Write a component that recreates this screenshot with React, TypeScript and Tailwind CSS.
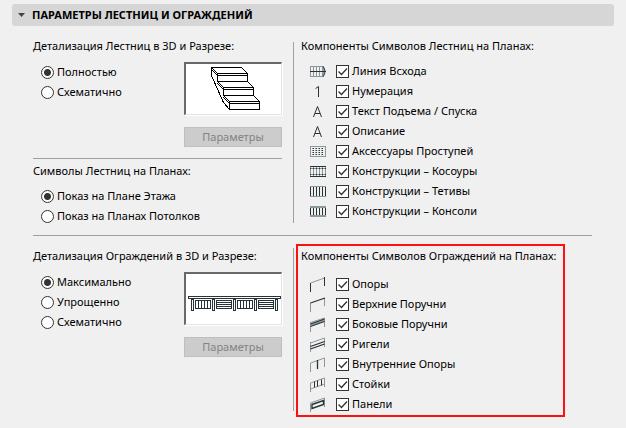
import { ReactNode } from 'react';

const DARK = '#263138';
const GRAY = '#8d9699';

function PlanIcon({ children }: { children: ReactNode }) {
  return (
    <svg width="16" height="11" viewBox="0 0 16 11" fill="none" shapeRendering="crispEdges" aria-hidden="true">
      {children}
    </svg>
  );
}

function RailIcon({ children }: { children: ReactNode }) {
  return (
    <svg width="16" height="15" viewBox="0 0 16 15" fill="none" aria-hidden="true">
      {children}
    </svg>
  );
}

const stairComponents = [
  {
    label: 'Линия Всхода',
    icon: (
      <PlanIcon>
        <path d="M.5 .5h13v10h-13zM3.5 0v11M6.5 0v11M9.5 0v11M12.5 0v11" stroke={GRAY} />
        <path d="M0 5.5h16" stroke={DARK} />
        <path d="M13 .5q2 2 2 5t-2 5" stroke={DARK} shapeRendering="auto" />
      </PlanIcon>
    ),
  },
  {
    label: 'Нумерация',
    icon: (
      <PlanIcon>
        <path d="M5.5 2.5L8.5 .5V11" stroke={DARK} shapeRendering="auto" />
      </PlanIcon>
    ),
  },
  {
    label: 'Текст Подъема / Спуска',
    icon: (
      <PlanIcon>
        <path d="M3.5 11L7.5 .5L11.5 11M5 7.5h5" stroke={DARK} shapeRendering="auto" />
      </PlanIcon>
    ),
  },
  {
    label: 'Описание',
    icon: (
      <PlanIcon>
        <path d="M3.5 11L7.5 .5L11.5 11M5 7.5h5" stroke={DARK} shapeRendering="auto" />
      </PlanIcon>
    ),
  },
  {
    label: 'Аксессуары Проступей',
    icon: (
      <PlanIcon>
        <path d="M.5 .5h15v10h-15z" stroke={GRAY} />
        <path d="M2.5 2v8M5.5 2v8M8.5 2v8M11.5 2v8" stroke={GRAY} strokeDasharray="1 1" />
        <path d="M3.5 2v8M6.5 2v8M9.5 2v8M12.5 2v8" stroke={DARK} strokeDasharray="1 1" />
      </PlanIcon>
    ),
  },
  {
    label: 'Конструкции – Косоуры',
    icon: (
      <PlanIcon>
        <path d="M.5 0v11M3.5 0v11M6.5 0v11M9.5 0v11M12.5 0v11M15.5 0v11M0 2.5h16M0 8.5h16" stroke={GRAY} />
        <path d="M0 .5h16M0 10.5h16" stroke={DARK} />
        <path d="M0 2.5h16M0 8.5h16" stroke={DARK} strokeDasharray="1 2" />
      </PlanIcon>
    ),
  },
  {
    label: 'Конструкции – Тетивы',
    icon: (
      <PlanIcon>
        <path d="M0 .5h16M0 10.5h16" stroke={GRAY} />
        <path d="M.5 1v9M3.5 1v9M6.5 1v9M9.5 1v9M12.5 1v9M15.5 1v9" stroke={DARK} />
      </PlanIcon>
    ),
  },
  {
    label: 'Конструкции – Консоли',
    icon: (
      <PlanIcon>
        <path d="M0 1h16M0 10h16" stroke={GRAY} strokeWidth="2" />
        <path d="M.5 2v7M3.5 2v7M6.5 2v7M9.5 2v7M12.5 2v7M15.5 2v7" stroke={DARK} />
      </PlanIcon>
    ),
  },
];

const railingComponents = [
  {
    label: 'Опоры',
    icon: (
      <RailIcon>
        <path d="M.5 6L14.5 1" stroke={GRAY} />
        <path d="M.5 6v9M14.5 0v9" stroke={DARK} />
      </RailIcon>
    ),
  },
  {
    label: 'Верхние Поручни',
    icon: (
      <RailIcon>
        <path d="M.5 6v9M14.5 1v8" stroke={GRAY} />
        <path d="M.5 6L15 1" stroke={DARK} strokeWidth="1.3" />
      </RailIcon>
    ),
  },
  {
    label: 'Боковые Поручни',
    icon: (
      <RailIcon>
        <path d="M.5 5v10M14.5 1v9M.5 5.5L14.5 1" stroke={GRAY} />
        <path d="M.5 8L14.5 3" stroke={GRAY} strokeWidth="3" />
        <path d="M.5 7L14.5 2M.5 9.5L14.5 4.5" stroke={DARK} />
      </RailIcon>
    ),
  },
  {
    label: 'Ригели',
    icon: (
      <RailIcon>
        <path d="M.5 5v10M14.5 1v9M.5 6L14.5 1" stroke={GRAY} />
        <path d="M.5 9.5L14.5 4.5M.5 12L14.5 7" stroke={DARK} strokeWidth="1.3" />
      </RailIcon>
    ),
  },
  {
    label: 'Внутренние Опоры',
    icon: (
      <RailIcon>
        <path d="M.5 15V6L14.5 1v9" stroke={GRAY} />
        <path d="M7.5 3v9" stroke={DARK} strokeWidth="1.3" />
      </RailIcon>
    ),
  },
  {
    label: 'Стойки',
    icon: (
      <RailIcon>
        <path d="M.5 15V6L14.5 1v9M.5 12L14.5 7" stroke={GRAY} />
        <path d="M4.5 4.5v6M7.5 3.5v6M11.5 2.5v6" stroke={DARK} />
      </RailIcon>
    ),
  },
  {
    label: 'Панели',
    icon: (
      <RailIcon>
        <path d="M.5 15V6L14.5 1v9" stroke={GRAY} />
        <path d="M2 7.5L13.5 3.5v4L2 11.5z" stroke={DARK} strokeWidth="1.4" />
      </RailIcon>
    ),
  },
];

function CheckRow({ label, icon }: { label: string; icon: ReactNode }) {
  return (
    <label className="flex h-5 items-center">
      <span className="flex w-[26px] shrink-0">{icon}</span>
      <span className="grid">
        <input
          type="checkbox"
          defaultChecked
          className="peer col-start-1 row-start-1 size-[13px] appearance-none border border-[#333] bg-white"
        />
        <svg
          viewBox="0 0 13 13"
          fill="none"
          className="pointer-events-none invisible col-start-1 row-start-1 size-[13px] peer-checked:visible"
          aria-hidden="true"
        >
          <path d="M2.5 6.5L5.5 9.5L11 3.5" stroke="#333" strokeWidth="1.3" />
        </svg>
      </span>
      <span className="ml-[3px] whitespace-nowrap">{label}</span>
    </label>
  );
}

function RadioGroup({ name, options }: { name: string; options: string[] }) {
  return (
    <div className="pl-2">
      {options.map((option, i) => (
        <label key={option} className="flex h-5 items-center gap-[3px]">
          <input
            type="radio"
            name={name}
            defaultChecked={i === 0}
            className="size-[13px] shrink-0 appearance-none rounded-full border border-[#333] bg-white checked:bg-[radial-gradient(circle,#333_3px,#fff_4px)]"
          />
          <span className="whitespace-nowrap">{option}</span>
        </label>
      ))}
    </div>
  );
}

function Preview({ children }: { children: ReactNode }) {
  return (
    <div className="flex w-[98px] shrink-0 flex-col gap-3">
      <div className="h-[53px] border-t-2 border-r border-b border-l-2 border-t-[#696969] border-r-[#e3e3e3] border-b-[#e3e3e3] border-l-[#696969] bg-white shadow-[1px_1px_0_#fff]">
        {children}
      </div>
      <button type="button" disabled className="h-5 border border-[#bfbfbf] bg-[#ccc] leading-4 text-[#838383]">
        Параметры
      </button>
    </div>
  );
}

function StairDrawing() {
  return (
    <svg width="94" height="50" viewBox="2 2 94 50" fill="none" stroke="#000" shapeRendering="crispEdges" aria-hidden="true">
      {[0, 1, 2].map((i) => (
        <g key={i} transform={`translate(${i * 6} ${i * 14})`}>
          <path d="M27.5 5.5h30l6 6h-30zM33.5 11.5v8h30v-8M33.5 13.5h30" />
          <path d="M27.5 7.5l6 6" />
        </g>
      ))}
      <path d="M27.5 5.5v8l12 27l6 7" />
    </svg>
  );
}

function RailingDrawing() {
  return (
    <svg width="95" height="50" viewBox="2 2 95 50" fill="none" stroke={DARK} shapeRendering="crispEdges" aria-hidden="true">
      <path d="M4.5 24.5h92v2h-92z" />
      {[7, 28, 49, 70, 91].map((x) => (
        <rect key={x} x={x + 0.5} y="27.5" width="2" height="11" />
      ))}
      {[11, 32, 53, 74].map((x, i) => (
        <g key={x} transform={`translate(${x} 28)`}>
          <rect x=".5" y=".5" width="15" height="8" />
          <path d={i % 2 ? 'M0 2.5h16M0 4.5h16M0 6.5h16' : 'M3.5 0v9M6.5 0v9M9.5 0v9M12.5 0v9'} />
        </g>
      ))}
    </svg>
  );
}

export default function App() {
  return (
    <main className="min-h-screen bg-[#f0f0f0] px-3 pt-1 pb-2 font-['Noto_Sans','Open_Sans',sans-serif] text-[11px] leading-4 text-black">
      <h1>
        <button type="button" aria-expanded="true" className="flex h-[22px] w-full items-center gap-[7px] rounded-[3px] bg-[#d6d6d6] pl-1.5 font-bold">
          <svg width="7" height="4" viewBox="0 0 7 4" fill="#444" aria-hidden="true">
            <path d="M0 0h7L3.5 4z" />
          </svg>
          ПАРАМЕТРЫ ЛЕСТНИЦ И ОГРАЖДЕНИЙ
        </button>
      </h1>

      <div className="mr-[22px] ml-[21px]">
        <section className="grid grid-cols-[260fr_299fr] border-b border-[#a0a0a0] pt-3 pb-[9px]">
          <div className="flex flex-col pr-[11px]">
            <h2 className="whitespace-nowrap">Детализация Лестниц в 3D и Разрезе:</h2>
            <div className="mt-2 flex justify-between">
              <RadioGroup name="stair-detail" options={['Полностью', 'Схематично']} />
              <Preview>
                <StairDrawing />
              </Preview>
            </div>
            <h2 className="mt-[11px] border-t border-[#a0a0a0] pt-1">Символы Лестниц на Планах:</h2>
            <div className="mt-[7px]">
              <RadioGroup name="stair-symbols" options={['Показ на Плане Этажа', 'Показ на Планах Потолков']} />
            </div>
          </div>
          <div className="mt-1 mb-[3px] border-l border-[#a0a0a0] pl-[7px]">
            <h2 className="-mt-1 whitespace-nowrap">Компоненты Символов Лестниц на Планах:</h2>
            <div className="mt-[7px] -mb-[3px] pl-[9px]">
              {stairComponents.map((item) => (
                <CheckRow key={item.label} {...item} />
              ))}
            </div>
          </div>
        </section>

        <section className="grid grid-cols-[260fr_299fr] pt-2">
          <div className="pt-1 pr-[11px]">
            <h2 className="whitespace-nowrap">Детализация Ограждений в 3D и Разрезе:</h2>
            <div className="mt-2 flex justify-between">
              <RadioGroup name="railing-detail" options={['Максимально', 'Упрощенно', 'Схематично']} />
              <Preview>
                <RailingDrawing />
              </Preview>
            </div>
          </div>
          <div className="mt-1 mb-1.5 border-l border-[#a0a0a0] pl-0.5">
            <div className="-mt-1 -mb-1.5 w-fit border-2 border-[#ff1010] pt-0.5 pr-1.5 pb-px pl-[3px]">
              <h2 className="whitespace-nowrap">Компоненты Символов Ограждений на Планах:</h2>
              <div className="mt-2.5 pl-[9px]">
                {railingComponents.map((item) => (
                  <CheckRow key={item.label} {...item} />
                ))}
              </div>
            </div>
          </div>
        </section>
      </div>
    </main>
  );
}
